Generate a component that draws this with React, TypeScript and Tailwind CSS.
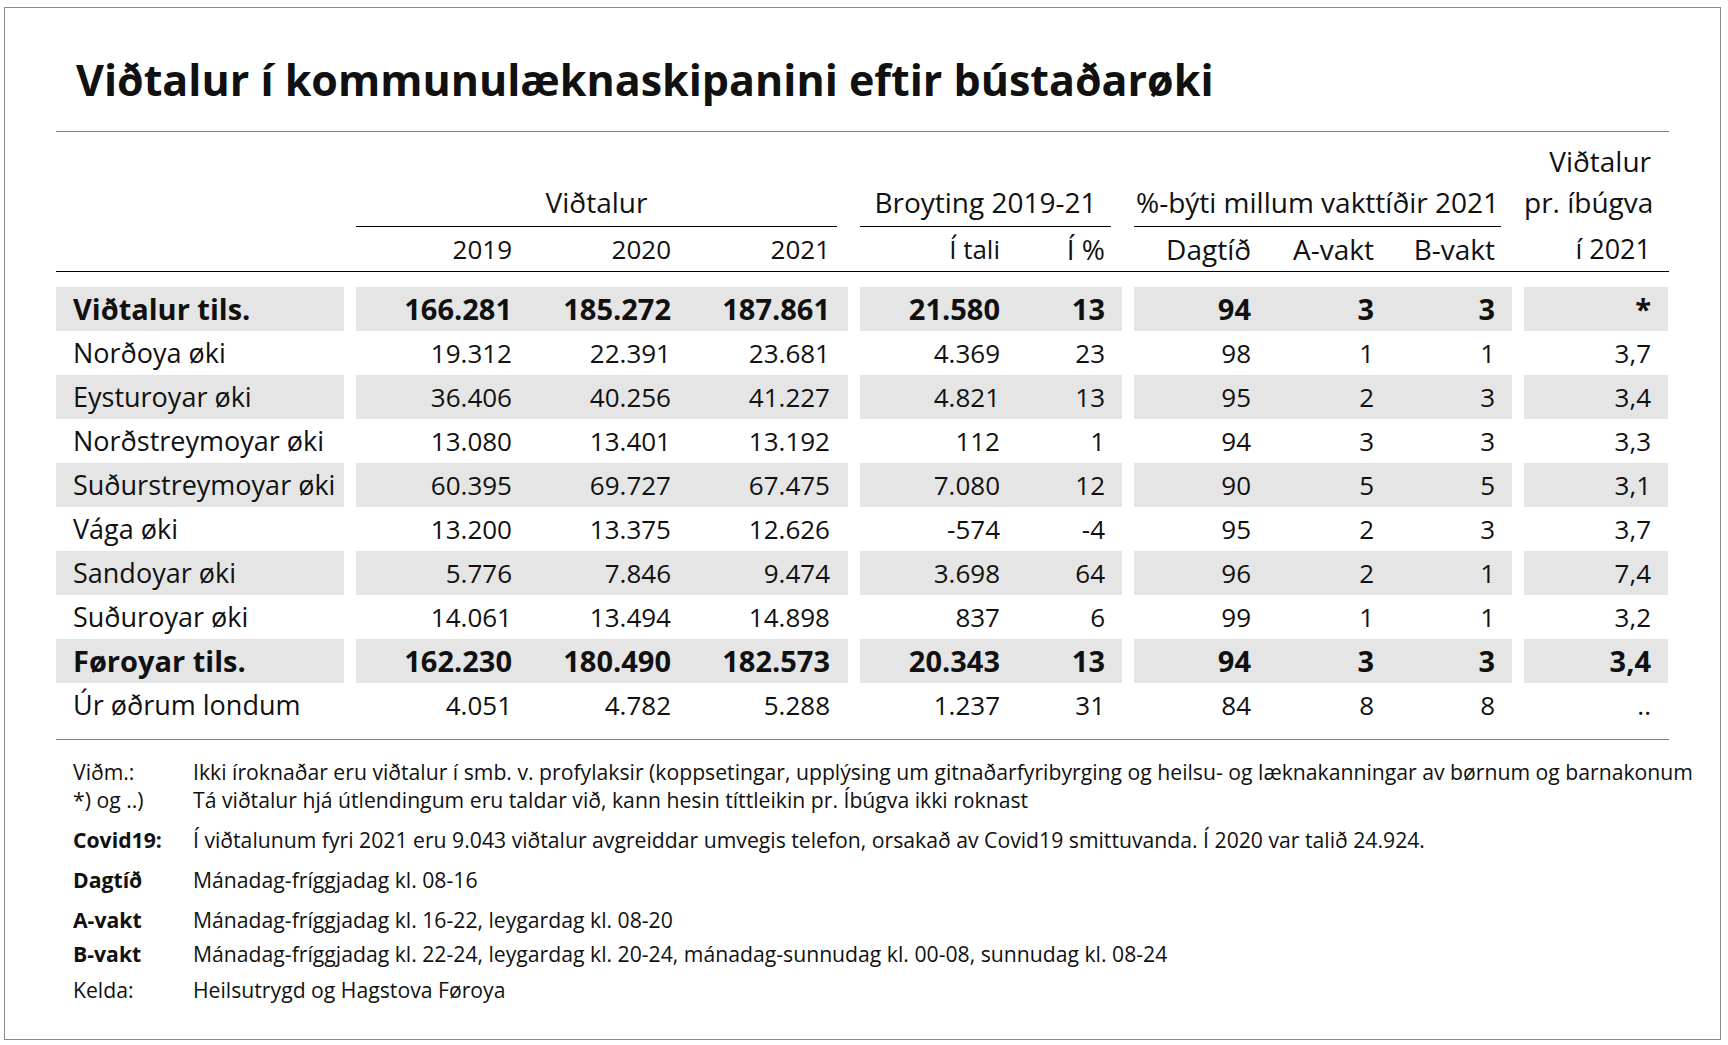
const rows = [
  { name: "Viðtalur tils.", v: ["166.281", "185.272", "187.861"], b: ["21.580", "13"], p: ["94", "3", "3"], c: "*", bold: true },
  { name: "Norðoya øki", v: ["19.312", "22.391", "23.681"], b: ["4.369", "23"], p: ["98", "1", "1"], c: "3,7" },
  { name: "Eysturoyar øki", v: ["36.406", "40.256", "41.227"], b: ["4.821", "13"], p: ["95", "2", "3"], c: "3,4" },
  { name: "Norðstreymoyar øki", v: ["13.080", "13.401", "13.192"], b: ["112", "1"], p: ["94", "3", "3"], c: "3,3" },
  { name: "Suðurstreymoyar øki", v: ["60.395", "69.727", "67.475"], b: ["7.080", "12"], p: ["90", "5", "5"], c: "3,1" },
  { name: "Vága øki", v: ["13.200", "13.375", "12.626"], b: ["-574", "-4"], p: ["95", "2", "3"], c: "3,7" },
  { name: "Sandoyar øki", v: ["5.776", "7.846", "9.474"], b: ["3.698", "64"], p: ["96", "2", "1"], c: "7,4" },
  { name: "Suðuroyar øki", v: ["14.061", "13.494", "14.898"], b: ["837", "6"], p: ["99", "1", "1"], c: "3,2" },
  { name: "Føroyar tils.", v: ["162.230", "180.490", "182.573"], b: ["20.343", "13"], p: ["94", "3", "3"], c: "3,4", bold: true },
  { name: "Úr øðrum londum", v: ["4.051", "4.782", "5.288"], b: ["1.237", "31"], p: ["84", "8", "8"], c: ".." },
];

const g1 = ["w-[156px]", "w-[159px]", "w-[159px]"];
const g2 = ["w-[140px]", "w-[105px]"];
const g3 = ["w-[117px]", "w-[123px]", "w-[121px]"];

const notes = [
  { label: "Covid19:", text: "Í viðtalunum fyri 2021 eru 9.043 viðtalur avgreiddar umvegis telefon, orsakað av Covid19 smittuvanda. Í 2020 var talið 24.924.", bold: true, gap: "mt-[12px]" },
  { label: "Dagtíð", text: "Mánadag-fríggjadag kl. 08-16", bold: true, gap: "mt-[12px]" },
  { label: "A-vakt", text: "Mánadag-fríggjadag kl. 16-22, leygardag kl. 08-20", bold: true, gap: "mt-[12px]" },
  { label: "B-vakt", text: "Mánadag-fríggjadag kl. 22-24, leygardag kl. 20-24, mánadag-sunnudag kl. 00-08, sunnudag kl. 08-24", bold: true, gap: "mt-[6px]" },
  { label: "Kelda:", text: "Heilsutrygd og Hagstova Føroya", bold: false, gap: "mt-[8px]" },
];

type Head = { text: string; size: string };

function GroupHead({ title, width, cols, labels, pr }: { title: string; width: string; cols: string[]; labels: Head[]; pr: string }) {
  return (
    <div className={width}>
      <div className="mr-[11px] border-b border-black pb-[4px] text-center leading-[40px] whitespace-nowrap">{title}</div>
      <div className={`flex leading-[44px] ${pr}`}>
        {labels.map((l, i) => (
          <div key={l.text} className={`text-right ${l.size} ${cols[i]}`}>{l.text}</div>
        ))}
      </div>
    </div>
  );
}

export default function App() {
  return (
    <div className="min-h-screen bg-white pt-[7px] pl-[4px] font-['Open_Sans',sans-serif] text-[#111]">
      <div className="h-[1033px] w-[1717px] border border-[#8c8c8c] pl-[51px] pr-[50px] pt-[42px]">
        <h1 className="ml-[20px] text-[43px] font-bold leading-[60px]">Viðtalur í kommunulæknaskipanini eftir bústaðarøki</h1>

        <div className="mt-[21px] w-[1613px] border-t border-[#808080]" />

        {/* header */}
        <div className="flex h-[140px] w-[1613px] items-end gap-[12px] border-b border-black text-[28px]">
          <div className="w-[288px]" />
          <GroupHead
            title="Viðtalur"
            width="w-[492px]"
            cols={g1}
            labels={[{ text: "2019", size: "text-[26px]" }, { text: "2020", size: "text-[26px]" }, { text: "2021", size: "text-[26px]" }]}
            pr="pr-[18px]"
          />
          <GroupHead
            title="Broyting 2019-21"
            width="w-[262px]"
            cols={g2}
            labels={[{ text: "Í tali", size: "text-[26px]" }, { text: "Í %", size: "text-[28px]" }]}
            pr="pr-[17px]"
          />
          <GroupHead
            title="%-býti millum vakttíðir 2021"
            width="w-[378px]"
            cols={g3}
            labels={[{ text: "Dagtíð", size: "text-[28px]" }, { text: "A-vakt", size: "text-[28px]" }, { text: "B-vakt", size: "text-[28px]" }]}
            pr="pr-[17px]"
          />
          <div className="w-[144px] pr-[17px] text-right whitespace-nowrap">
            <div className="leading-[42px]">Viðtalur</div>
            <div className="pb-[5px] leading-[40px]">pr. íbúgva</div>
            <div className="text-[27px] leading-[44px]">í 2021</div>
          </div>
        </div>

        {/* rows */}
        <div className="mt-[15px] w-[1613px]">
          {rows.map((r, idx) => {
            const bg = idx % 2 === 0 ? "bg-[#e5e5e5]" : "";
            const font = r.bold ? "font-bold text-[29px]" : "text-[26px]";
            return (
              <div key={r.name} className={`flex h-[44px] gap-[12px] leading-[44px] ${font}`}>
                <div className={`w-[288px] pl-[17px] whitespace-nowrap ${r.bold ? "" : "text-[27px]"} ${bg}`}>{r.name}</div>
                <div className={`flex w-[492px] pr-[18px] ${bg}`}>
                  {r.v.map((x, i) => (
                    <div key={i} className={`text-right ${g1[i]}`}>{x}</div>
                  ))}
                </div>
                <div className={`flex w-[262px] pr-[17px] ${bg}`}>
                  {r.b.map((x, i) => (
                    <div key={i} className={`text-right ${g2[i]}`}>{x}</div>
                  ))}
                </div>
                <div className={`flex w-[378px] pr-[17px] ${bg}`}>
                  {r.p.map((x, i) => (
                    <div key={i} className={`text-right ${g3[i]}`}>{x}</div>
                  ))}
                </div>
                <div className={`w-[144px] pr-[17px] text-right ${bg}`}>{r.c}</div>
              </div>
            );
          })}
        </div>

        <div className="mt-[12px] w-[1613px] border-t border-[#808080]" />

        {/* notes */}
        <div className="mt-[18px] pl-[17px] text-[21.2px] leading-[28px]">
          <div className="flex">
            <div className="w-[120px] shrink-0">
              <div>Viðm.:</div>
              <div>*) og ..)</div>
            </div>
            <div className="whitespace-nowrap">
              <div>Ikki íroknaðar eru viðtalur í smb. v. profylaksir (koppsetingar, upplýsing um gitnaðarfyribyrging og heilsu- og læknakanningar av børnum og barnakonum</div>
              <div>Tá viðtalur hjá útlendingum eru taldar við, kann hesin títtleikin pr. Íbúgva ikki roknast</div>
            </div>
          </div>
          {notes.map((n) => (
            <div key={n.label} className={`flex ${n.gap}`}>
              <div className={`w-[120px] shrink-0 ${n.bold ? "font-bold" : ""}`}>{n.label}</div>
              <div className="whitespace-nowrap">{n.text}</div>
            </div>
          ))}
        </div>
      </div>
    </div>
  );
}
